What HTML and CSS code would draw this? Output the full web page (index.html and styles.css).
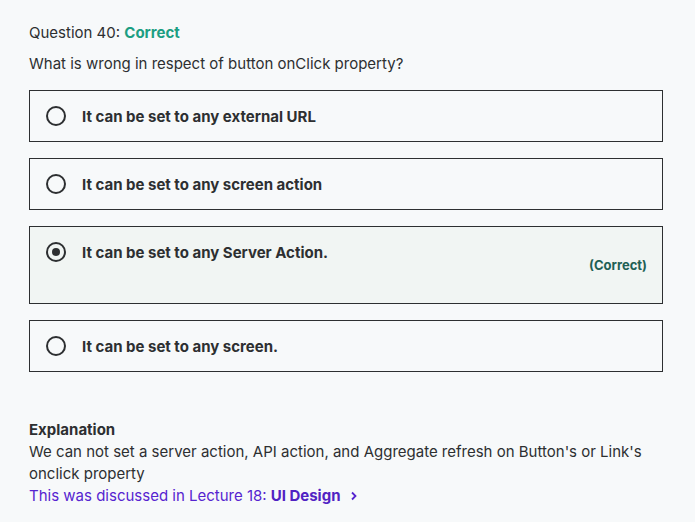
FILE: index.html
```html
<!DOCTYPE html>
<html>
<head>
<meta charset="utf-8">
<link rel="stylesheet" href="styles.css">
</head>
<body>
<div class="page">
  <div class="q-head">Question 40: <span class="status">Correct</span></div>
  <div class="q-text">What is wrong in respect of button onClick property?</div>
  <div class="options">
    <div class="option">
      <div class="row"><span class="radio"></span><span class="label">It can be set to any external URL</span></div>
    </div>
    <div class="option">
      <div class="row"><span class="radio"></span><span class="label">It can be set to any screen action</span></div>
    </div>
    <div class="option correct">
      <div class="row"><span class="radio checked"></span><span class="label">It can be set to any Server Action.</span></div>
      <div class="verdict">(Correct)</div>
    </div>
    <div class="option">
      <div class="row"><span class="radio"></span><span class="label">It can be set to any screen.</span></div>
    </div>
  </div>
  <div class="explanation">
    <div class="exp-title">Explanation</div>
    <div class="exp-text">We can not set a server action, API action, and Aggregate refresh on Button's or Link's onclick property</div>
    <a class="lecture">This was discussed in Lecture 18: <b>UI Design</b><svg class="chev" width="12" height="12" viewBox="0 0 12 12"><path d="M4 2.5 L7.5 6 L4 9.5" fill="none" stroke="currentColor" stroke-width="1.8"/></svg></a>
  </div>
</div>
</body>
</html>
```

FILE: styles.css
```css
html, body {
  margin: 0;
  padding: 0;
  background: #f7f9fa;
}
body {
  font-family: Inter, Roboto, sans-serif;
  color: #2d2f31;
  font-size: 15px;
}
.page {
  padding: 23px 32px 0 29px;
}
.q-head {
  line-height: 20px;
}
.status {
  font-weight: 700;
  color: #1c9e82;
}
.q-text {
  margin-top: 10px;
  line-height: 22px;
}
.options {
  margin-top: 15px;
  display: flex;
  flex-direction: column;
  gap: 16px;
}
.option {
  border: 1px solid #2d2f31;
  padding: 16px 15px;
}
.option.correct {
  background: #f1f5f3;
  padding-bottom: 17px;
}
.row {
  display: flex;
  align-items: center;
  gap: 16px;
  height: 18px;
}
.radio {
  width: 16px;
  height: 16px;
  border: 2px solid #2d2f31;
  border-radius: 50%;
  box-sizing: content-box;
  position: relative;
  flex: none;
  margin-left: 1px;
}
.radio.checked::after {
  content: "";
  position: absolute;
  left: 4px;
  top: 4px;
  width: 8px;
  height: 8px;
  border-radius: 50%;
  background: #2d2f31;
}
.label {
  font-weight: 700;
  font-size: 15px;
}
.verdict {
  text-align: right;
  font-weight: 700;
  font-size: 13px;
  color: #1e6055;
  line-height: 16px;
  margin-top: -4px;
  padding-bottom: 13px;
}
.explanation {
  margin-top: 47px;
  line-height: 22px;
}
.exp-title {
  font-weight: 700;
}
.lecture {
  color: #5624d0;
  display: inline-flex;
  align-items: center;
}
.lecture b {
  color: #5022c3;
  margin-left: 4px;
}
.chev {
  margin-left: 8px;
}
```
